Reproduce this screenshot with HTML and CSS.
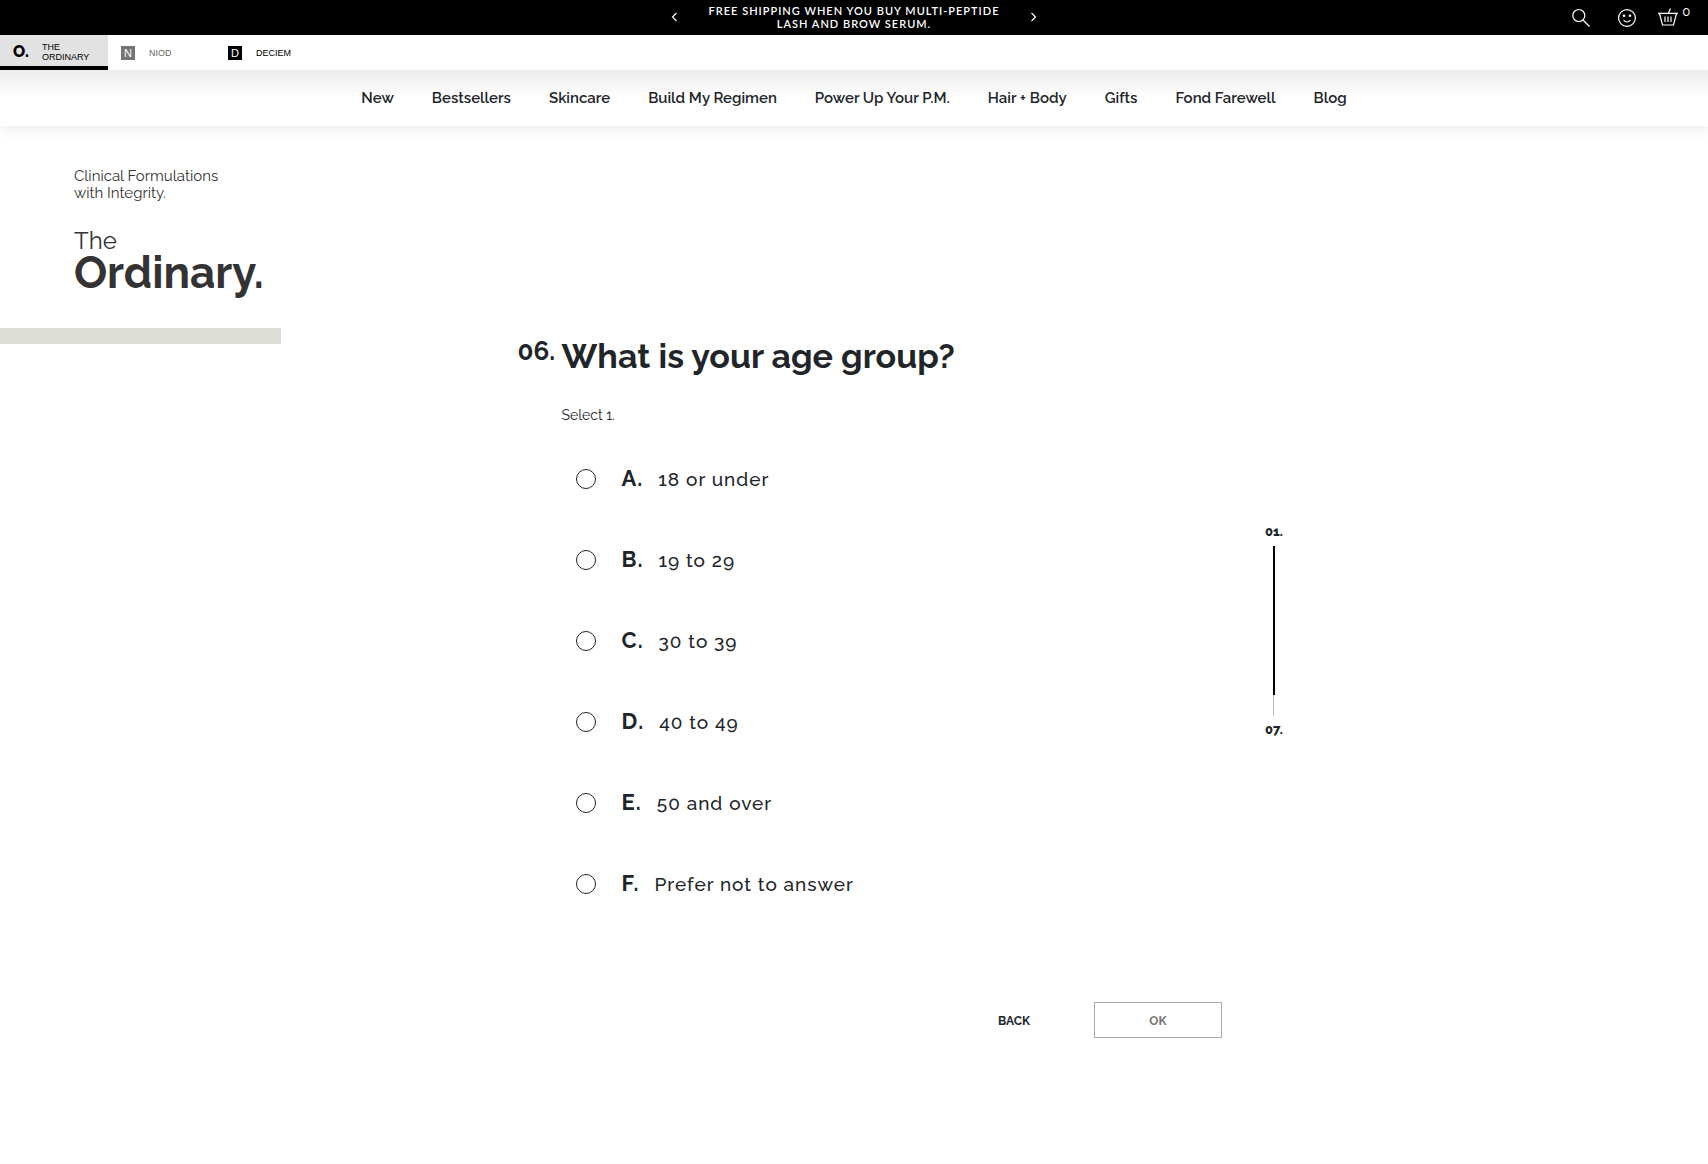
FILE: index.html
```html
<!DOCTYPE html>
<html lang="en">
<head>
    <meta charset="UTF-8">
    <meta name="viewport" content="width=device-width, initial-scale=1.0">
    <title>Build My Regimen | The Ordinary</title>
    <link rel="stylesheet" href="styles.css">
</head>
<body>
    <header>
        <div class="promo-bar">
            <div class="promo">
                <button class="icon-btn" type="button" aria-label="Previous">
                    <svg width="5" height="8" viewBox="0 0 5 8"><path d="M4.500 0L.5 4l4 4"/></svg>
                </button>
                <p class="promo-text">FREE SHIPPING WHEN YOU BUY MULTI-PEPTIDE LASH AND BROW SERUM.</p>
                <button class="icon-btn" type="button" aria-label="Next">
                    <svg width="5" height="8" viewBox="0 0 5 8"><path d="M.5 0l4 4-4 4"/></svg>
                </button>
            </div>
            <div class="tools">
                <button class="icon-btn" type="button" aria-label="Search">
                    <svg width="18" height="18" viewBox="0 0 18 18"><circle cx="6.8" cy="6.5" r="6"/><path d="M11 11l6.500 6.500"/></svg>
                </button>
                <button class="icon-btn" type="button" aria-label="Account">
                    <svg width="18" height="18" viewBox="0 0 18 18"><circle cx="9" cy="9" r="8.400"/><circle class="dot" cx="6" cy="6.800" r="1.300"/><circle class="dot" cx="12" cy="6.800" r="1.300"/><path d="M5.600 11.200q3.400 3.600 6.800 0"/></svg>
                </button>
                <button class="icon-btn basket" type="button" aria-label="Basket, 0 items">
                    <svg width="20" height="18" viewBox="0 0 20 18"><path d="M0 4.300h20M1.500 4.500l3 11.500h11l3-11.500M10.500 4l2-4.500M7 7.500v5.500M10 7.500v5.500M13 7.500v5.500"/></svg>
                    <span class="count">0</span>
                </button>
            </div>
        </div>

        <nav class="brands" aria-label="Brands">
            <a class="brand active" href="#"><span class="mark-o">O.</span><span>THE ORDINARY</span></a>
            <a class="brand muted" href="#"><span class="mark">N</span><span>NIOD</span></a>
            <a class="brand" href="#"><span class="mark">D</span><span>DECIEM</span></a>
        </nav>

        <nav class="main-nav" aria-label="Main">
            <a href="#">New</a>
            <a href="#">Bestsellers</a>
            <a href="#">Skincare</a>
            <a href="#">Build My Regimen</a>
            <a href="#">Power Up Your P.M.</a>
            <a href="#">Hair + Body</a>
            <a href="#">Gifts</a>
            <a href="#">Fond Farewell</a>
            <a href="#">Blog</a>
        </nav>
    </header>

    <main class="page">
        <aside class="side">
            <div class="side-inner">
                <p class="tagline">Clinical Formulations<br>with Integrity.</p>
                <p class="logo-the">The</p>
                <p class="logo-ordinary">Ordinary.</p>
            </div>
            <div class="side-bar"></div>
        </aside>

        <form class="quiz">
            <div class="question">
                <span class="number">06.</span>
                <h1>What is your age group?</h1>
            </div>
            <p class="hint">Select 1.</p>

            <div class="options">
                <label class="option"><input type="radio" name="age"><b>A.</b><span>18 or under</span></label>
                <label class="option"><input type="radio" name="age"><b>B.</b><span>19 to 29</span></label>
                <label class="option"><input type="radio" name="age"><b>C.</b><span>30 to 39</span></label>
                <label class="option"><input type="radio" name="age"><b>D.</b><span>40 to 49</span></label>
                <label class="option"><input type="radio" name="age"><b>E.</b><span>50 and over</span></label>
                <label class="option"><input type="radio" name="age"><b>F.</b><span>Prefer not to answer</span></label>
            </div>

            <div class="actions">
                <button class="back" type="button">BACK</button>
                <button class="ok" type="submit" disabled>OK</button>
            </div>
        </form>

        <div class="progress">
            <span>01.</span>
            <div class="track"><div class="done"></div><div class="left"></div></div>
            <span>07.</span>
        </div>
    </main>
</body>
</html>
```
FILE: styles.css
```css
* {
    margin: 0;
    padding: 0;
    box-sizing: border-box;
}

body {
    background: #fff;
    color: #212529;
    font-family: Raleway, Lato, sans-serif;
    font-variant-numeric: oldstyle-nums;
}

a {
    color: inherit;
    text-decoration: none;
}

button {
    background: none;
    border: 0;
    color: inherit;
    font-family: inherit;
    cursor: pointer;
}

/* promo bar */
.promo-bar {
    display: grid;
    grid-template-columns: 1fr auto 1fr;
    align-items: center;
    height: 35px;
    background: #000;
    color: #fff;
}

.promo {
    grid-column: 2;
    display: flex;
    align-items: center;
    gap: 22px;
    padding-bottom: 2px;
}

.promo-text {
    width: 310px;
    font-family: Lato, sans-serif;
    font-size: 11px;
    font-weight: 600;
    line-height: 13px;
    letter-spacing: 1px;
    text-align: center;
}

.icon-btn {
    display: flex;
}

.icon-btn svg {
    fill: none;
    stroke: #fff;
    stroke-width: 1.2;
    overflow: visible;
}

.icon-btn .dot {
    fill: #fff;
    stroke: none;
}

.tools {
    display: flex;
    justify-content: flex-end;
    gap: 28px;
    padding-right: 18px;
}

.tools .basket {
    gap: 4px;
    margin-left: -6px;
}

.count {
    font-size: 11px;
    font-weight: 500;
    font-variant-numeric: lining-nums;
    line-height: 8px;
}

/* brand switcher */
.brands {
    display: flex;
    height: 35px;
    font-family: "Liberation Sans", Arial, sans-serif;
    font-size: 9px;
    line-height: 10px;
}

.brand {
    display: flex;
    align-items: center;
    gap: 14px;
    width: 107px;
    padding-left: 13px;
    color: #000;
}

.brand.active {
    gap: 13px;
    width: 108px;
    background: #e2e2e2;
    border-bottom: 4px solid #000;
    padding-top: 3px;
}

.brand.muted {
    color: #666;
}

.mark-o {
    font-family: Raleway, Lato, sans-serif;
    font-size: 16px;
    font-weight: 800;
}

.mark {
    width: 14px;
    height: 14px;
    background: #000;
    color: #fff;
    font-size: 11px;
    line-height: 14px;
    text-align: center;
}

.muted .mark {
    background: #757575;
}

/* main navigation */
.main-nav {
    display: flex;
    justify-content: center;
    align-items: center;
    gap: 38px;
    height: 56px;
    background: linear-gradient(#ececec, #fff 28px);
    box-shadow: 0 4px 12px rgba(0, 0, 0, 0.08);
    font-size: 15px;
    font-weight: 600;
}

/* page */
.page {
    display: grid;
    grid-template-columns: 30fr 41fr 28fr;
    align-items: start;
}

.side {
    width: 281px;
    padding-top: 42px;
    color: #333;
}

.side-inner {
    padding-left: 74px;
}

.tagline {
    margin-bottom: 26px;
    font-size: 15px;
    line-height: 17px;
}

.logo-the {
    font-size: 24px;
    line-height: 26px;
}

.logo-ordinary {
    font-size: 44px;
    font-weight: 700;
    line-height: 38px;
}

.side-bar {
    height: 16px;
    margin-top: 36px;
    background: #deded9;
}

.quiz {
    padding-top: 208px;
}

.question {
    display: flex;
    gap: 6px;
}

.number {
    width: 38px;
    font-size: 26px;
    font-weight: 700;
    line-height: 34px;
}

h1 {
    font-size: 34px;
    font-weight: 700;
    line-height: 44px;
}

.hint {
    margin: 28px 0 0 44px;
    font-size: 14px;
    line-height: 18px;
}

.options {
    margin: 14px 0 0 58px;
}

.option {
    display: flex;
    align-items: center;
    height: 81px;
    font-size: 19px;
    font-weight: 500;
    letter-spacing: 1px;
}

.option input {
    appearance: none;
    width: 20px;
    height: 20px;
    margin-right: 26px;
    border: 1px solid #212529;
    border-radius: 50%;
}

.option input:checked {
    background: #212529;
}

.option b {
    margin-right: 15px;
    padding-bottom: 2px;
    font-size: 22px;
    line-height: 26px;
}

.actions {
    display: flex;
    justify-content: flex-end;
    margin-top: 78px;
    padding-right: 3px;
    gap: 64px;
}

.back,
.ok {
    height: 36px;
    padding-top: 2px;
    font-size: 12px;
    font-weight: 700;
}

.ok {
    width: 128px;
    border: 1px solid #aaa;
    color: #777;
}

/* progress */
.progress {
    display: flex;
    flex-direction: column;
    align-items: center;
    justify-self: start;
    gap: 7px;
    margin: 399px 0 0 40px;
    font-size: 13px;
    font-weight: 800;
    line-height: 14px;
}

.track {
    display: flex;
    flex-direction: column;
    align-items: center;
    height: 170px;
}

.done {
    flex: 7;
    width: 2px;
    background: #000;
}

.left {
    flex: 1;
    width: 1px;
    background: #bbb;
}
```
